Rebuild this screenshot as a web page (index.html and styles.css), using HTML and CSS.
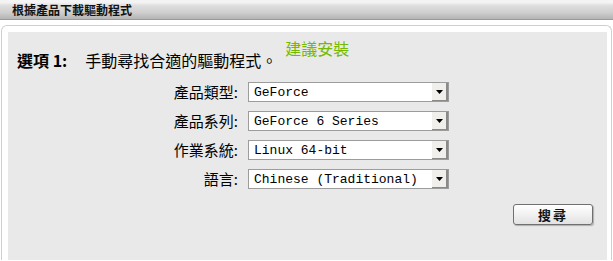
FILE: index.html
```html
<!DOCTYPE html>
<html>
<head>
<meta charset="utf-8">
<title>根據產品下載驅動程式</title>
<link rel="stylesheet" href="styles.css">
</head>
<body>

<!-- Title bar -->
<div class="title-bar">根據產品下載驅動程式</div>

<!-- Driver search panel -->
<div class="panel">
  <div class="panel-inner">

    <div class="option-row">
      <div class="option-title"><b>選項 1:</b><span>手動尋找合適的驅動程式。</span></div>
      <div class="recommend">建議安裝</div>
    </div>

    <div class="form-grid">
      <label class="field-label">產品類型:</label>
      <div class="dropdown"><span>GeForce</span><div class="dropdown-btn"><svg width="7" height="4" viewBox="0 0 7 4"><path d="M0 0H7L3.5 4Z" fill="#000"/></svg></div></div>

      <label class="field-label">產品系列:</label>
      <div class="dropdown"><span>GeForce 6 Series</span><div class="dropdown-btn"><svg width="7" height="4" viewBox="0 0 7 4"><path d="M0 0H7L3.5 4Z" fill="#000"/></svg></div></div>

      <label class="field-label">作業系統:</label>
      <div class="dropdown"><span>Linux 64-bit</span><div class="dropdown-btn"><svg width="7" height="4" viewBox="0 0 7 4"><path d="M0 0H7L3.5 4Z" fill="#000"/></svg></div></div>

      <label class="field-label">語言:</label>
      <div class="dropdown"><span>Chinese (Traditional)</span><div class="dropdown-btn"><svg width="7" height="4" viewBox="0 0 7 4"><path d="M0 0H7L3.5 4Z" fill="#000"/></svg></div></div>
    </div>

    <div class="actions">
      <button class="search-btn">搜尋</button>
    </div>

  </div>
</div>

</body>
</html>
```

FILE: styles.css
```css
/* Page */
body {
  margin: 0;
  width: 613px;
  height: 261px;
  overflow: hidden;
  background: #fff;
  font-family: "Noto Sans CJK TC", "Noto Sans", sans-serif;
  color: #000;
}

/* Grey gradient title bar */
.title-bar {
  height: 19px;
  line-height: 20px;
  padding-left: 12px;
  font-size: 12px;
  font-weight: bold;
  color: #111;
  background: linear-gradient(to bottom, #f4f4f4 0%, #f4f4f4 12%, #dedede 30%, #cfcfcf 65%, #b4b4b4 100%);
  border-bottom: 1px solid #9a9a9a;
}

/* Outer panel with rounded top border */
.panel {
  margin: 5px 1px 0 1px;
  padding: 6px 4px 0 6px;
  border: 1px solid #cfcfcf;
  border-bottom: none;
  border-radius: 6px 6px 0 0;
}

.panel-inner {
  height: 228px;
  background: #e9e9e9;
}

/* Option heading row */
.option-row {
  display: flex;
  height: 37px;
  padding-left: 9px;
}

.option-title {
  align-self: flex-end;
  font-size: 16px;
  line-height: 18px;
}

.option-title b {
  margin-right: 18px;
}

.recommend {
  align-self: flex-start;
  margin: 7px 0 0 8px;
  font-size: 16px;
  line-height: 18px;
  color: #76b900;
}

/* Label / dropdown grid */
.form-grid {
  display: grid;
  grid-template-columns: 230px 201px;
  column-gap: 10px;
  row-gap: 9px;
  margin-top: 13px;
}

.field-label {
  text-align: right;
  font-size: 15px;
  line-height: 20px;
}

.dropdown {
  display: flex;
  height: 18px;
  border: 1px solid #9c9c9c;
  background: #fff;
  font-family: "Liberation Mono", monospace;
  font-size: 13px;
  line-height: 19px;
}

.dropdown span {
  flex: 1;
  padding-left: 5px;
  white-space: nowrap;
}

.dropdown-btn {
  display: flex;
  justify-content: center;
  align-items: center;
  width: 14px;
  background: #f1efec;
  border-right: 2px solid #8a8a8a;
  border-bottom: 1px solid #8a8a8a;
}

/* Search button */
.actions {
  display: flex;
  justify-content: flex-end;
  margin-top: 15px;
  padding-right: 14px;
}

.search-btn {
  width: 80px;
  height: 21px;
  padding: 0;
  font-family: "Noto Sans CJK TC", sans-serif;
  font-size: 13px;
  font-weight: bold;
  letter-spacing: 2px;
  color: #111;
  background: linear-gradient(to bottom, #ffffff 0%, #f1f1f1 50%, #e2e2e2 100%);
  border: 1px solid #707070;
  border-radius: 3px;
  box-shadow: 1px 1px 1px rgba(0, 0, 0, 0.25);
}
```
